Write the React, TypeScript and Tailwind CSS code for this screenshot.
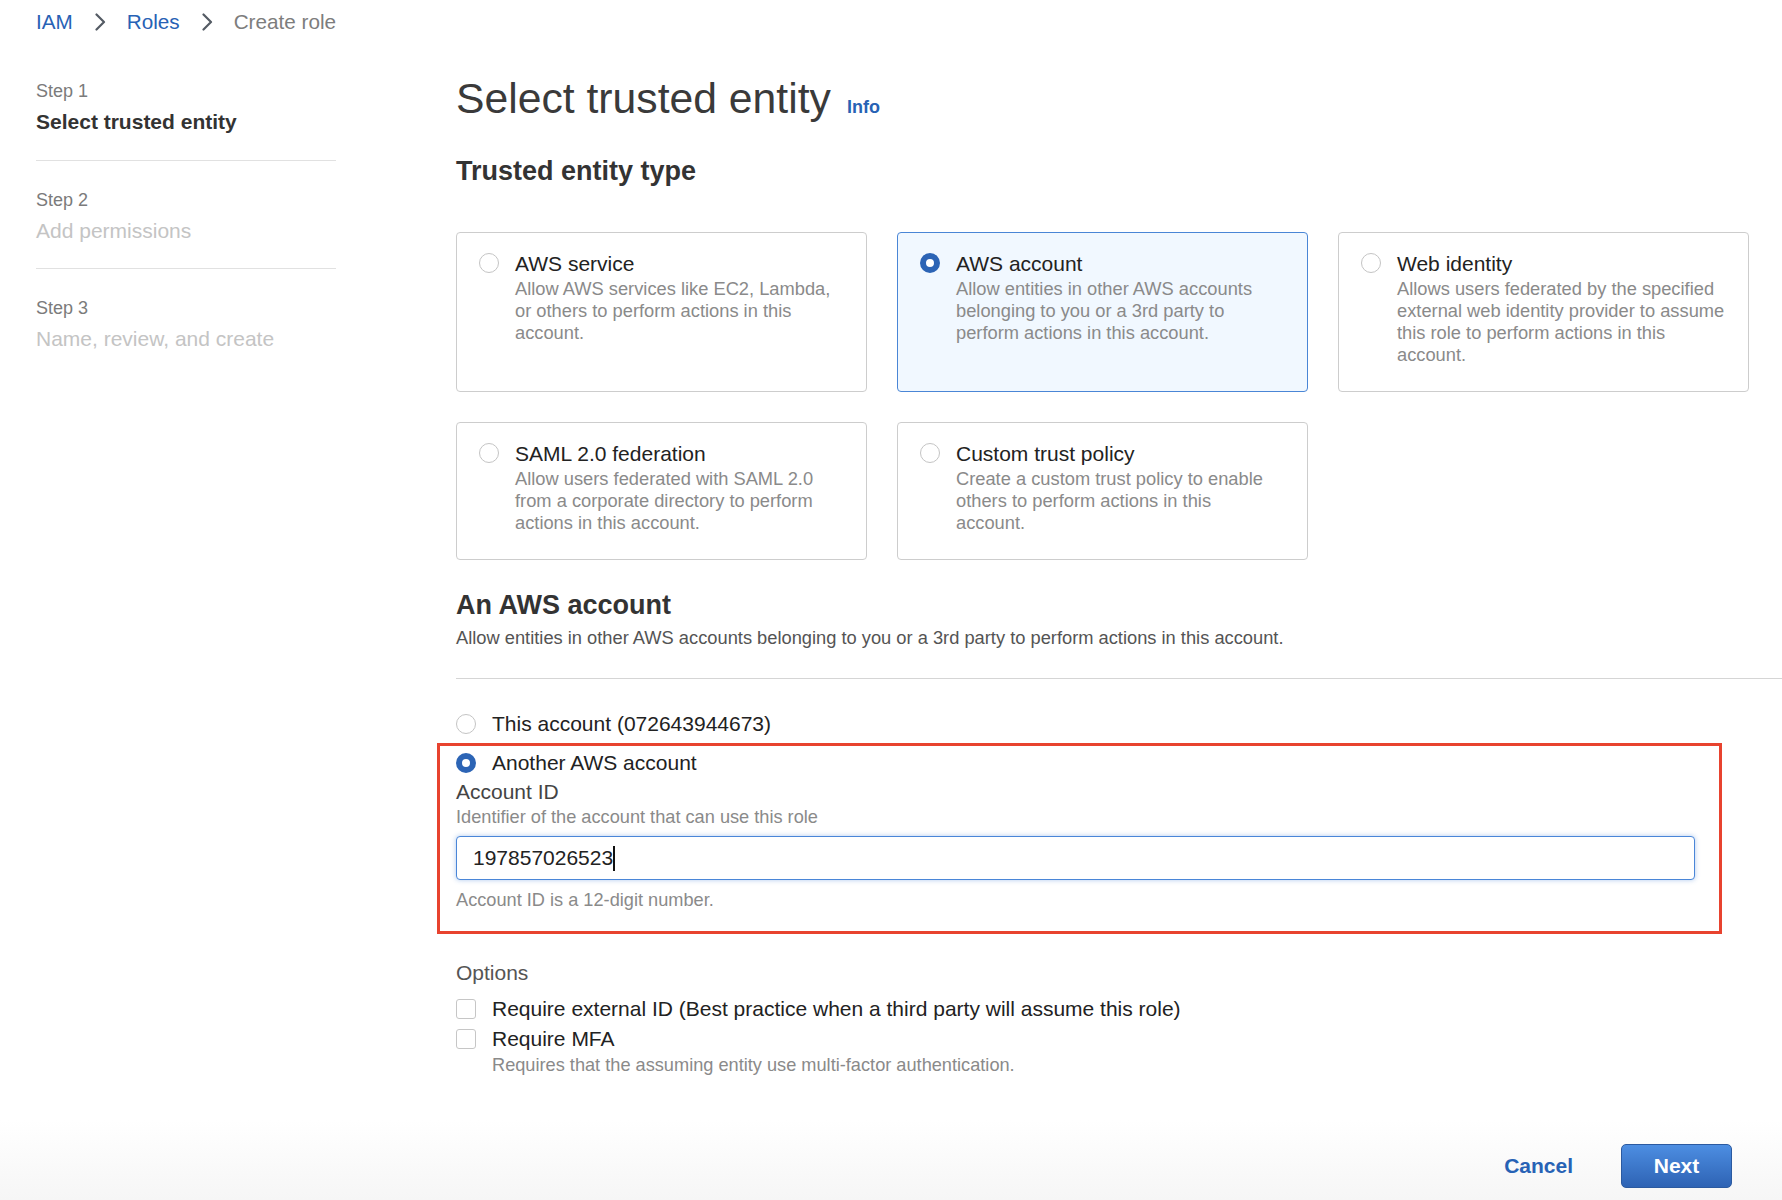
import React from "react";

function Chevron() {
  return (
    <svg width="12" height="18" viewBox="0 0 12 18" className="shrink-0">
      <path d="M2.5 1.5 L10 9 L2.5 16.5" fill="none" stroke="#545b64" strokeWidth="2.2" strokeLinecap="round" strokeLinejoin="round" />
    </svg>
  );
}

function Radio({ checked }: { checked?: boolean }) {
  return checked ? (
    <span className="block w-[20px] h-[20px] shrink-0 rounded-full border-[6px] border-[#2c64b5] bg-white" />
  ) : (
    <span className="block w-[20px] h-[20px] shrink-0 rounded-full border border-[#c4c4c4] bg-white" />
  );
}

function Checkbox() {
  return <span className="block w-[20px] h-[20px] shrink-0 rounded-[3px] border border-[#c6c6c6] bg-white" />;
}

function Card({ title, lines, selected }: { title: string; lines: string[]; selected?: boolean }) {
  return (
    <div
      className={
        selected
          ? "flex gap-[16px] rounded-[4px] border border-[#4a86d6] bg-[#f1f8ff] pt-[19px] pb-[25px] pl-[22px] pr-[12px]"
          : "flex gap-[16px] rounded-[4px] border border-[#cdcdcd] bg-white pt-[19px] pb-[25px] pl-[22px] pr-[12px]"
      }
    >
      <div className="pt-[1px]">
        <Radio checked={selected} />
      </div>
      <div>
        <div className="text-[21px] leading-[24px] text-[#222]">{title}</div>
        <div className="mt-[2px] text-[18.3px] leading-[22px] text-[#8a8a8a]">
          {lines.map((l) => (
            <div key={l} className="whitespace-nowrap">{l}</div>
          ))}
        </div>
      </div>
    </div>
  );
}

export default function App() {
  return (
    <div className="min-h-[1200px] flex flex-col bg-white text-[#333] font-['Liberation_Sans',Arial,sans-serif]">
      <nav className="flex items-center pl-[36px] pt-[10px] text-[20.7px] leading-[24px]">
        <span className="text-[#2762b5]">IAM</span>
        <span className="mx-[21px] flex"><Chevron /></span>
        <span className="text-[#2762b5]">Roles</span>
        <span className="mx-[21px] flex"><Chevron /></span>
        <span className="text-[#7d7d7d]">Create role</span>
      </nav>

      <div className="flex pl-[36px]">
        <aside className="w-[300px] shrink-0 pt-[45px]">
          <div className="pb-[24px] border-b border-[#e1e1e1]">
            <div className="text-[18px] leading-[24px] text-[#7b7b7b]">Step 1</div>
            <div className="mt-[5px] text-[21px] leading-[28px] font-bold text-[#333]">Select trusted entity</div>
          </div>
          <div className="pt-[27px] pb-[23px] border-b border-[#e1e1e1]">
            <div className="text-[18px] leading-[24px] text-[#7b7b7b]">Step 2</div>
            <div className="mt-[5px] text-[21px] leading-[28px] text-[#c4c4c4]">Add permissions</div>
          </div>
          <div className="pt-[27px]">
            <div className="text-[18px] leading-[24px] text-[#7b7b7b]">Step 3</div>
            <div className="mt-[5px] text-[21px] leading-[28px] text-[#c4c4c4]">Name, review, and create</div>
          </div>
        </aside>

        <main className="ml-[120px] flex-1 pt-[40px]">
          <div className="flex items-baseline gap-[16px]">
            <h1 className="text-[42.7px] leading-[48px] text-[#3a3a3a]">Select trusted entity</h1>
            <span className="text-[18px] font-bold text-[#2762b5]">Info</span>
          </div>

          <h2 className="mt-[33px] text-[27px] leading-[32px] font-bold text-[#333]">Trusted entity type</h2>

          <div className="mt-[45px] w-[1293px] grid grid-cols-3 gap-[30px]">
            <Card
              title="AWS service"
              lines={["Allow AWS services like EC2, Lambda,", "or others to perform actions in this", "account."]}
            />
            <Card
              selected
              title="AWS account"
              lines={["Allow entities in other AWS accounts", "belonging to you or a 3rd party to", "perform actions in this account."]}
            />
            <Card
              title="Web identity"
              lines={[
                "Allows users federated by the specified",
                "external web identity provider to assume",
                "this role to perform actions in this",
                "account.",
              ]}
            />
            <Card
              title="SAML 2.0 federation"
              lines={["Allow users federated with SAML 2.0", "from a corporate directory to perform", "actions in this account."]}
            />
            <Card
              title="Custom trust policy"
              lines={["Create a custom trust policy to enable", "others to perform actions in this", "account."]}
            />
          </div>

          <h2 className="mt-[29px] text-[27px] leading-[32px] font-bold text-[#333]">An AWS account</h2>
          <p className="mt-[6px] text-[18.3px] leading-[22px] text-[#545454]">
            Allow entities in other AWS accounts belonging to you or a 3rd party to perform actions in this account.
          </p>
          <div className="mt-[29px] border-t border-[#d5d5d5]" />

          <div className="mt-[33px] flex items-center gap-[16px]">
            <Radio />
            <span className="text-[21px] leading-[24px] text-[#222]">This account (072643944673)</span>
          </div>

          <div className="mt-[7px] -ml-[19px] w-[1285px] border-[3px] border-[#e8432f] pl-[16px] pr-[24px] pt-[5px] pb-[20px]">
            <div className="flex items-center gap-[16px]">
              <Radio checked />
              <span className="text-[21px] leading-[24px] text-[#222]">Another AWS account</span>
            </div>
            <div className="mt-[5px] text-[21px] leading-[24px] text-[#444]">Account ID</div>
            <div className="mt-[2px] text-[18.2px] leading-[22px] text-[#8a8a8a]">Identifier of the account that can use this role</div>
            <div className="mt-[8px] h-[44px] flex items-center rounded-[4px] border border-[#4a86d8] bg-white pl-[16px] shadow-[0_0_5px_rgba(74,134,216,0.45)]">
              <span className="text-[21px] leading-[24px] text-[#222]">197857026523</span>
              <span className="block w-[1.5px] h-[25px] bg-[#111]" />
            </div>
            <div className="mt-[9px] text-[18.2px] leading-[22px] text-[#8a8a8a]">Account ID is a 12-digit number.</div>
          </div>

          <div className="mt-[27px] text-[21px] leading-[24px] text-[#555]">Options</div>
          <div className="mt-[12px] flex items-center gap-[16px]">
            <Checkbox />
            <span className="text-[21px] leading-[24px] text-[#222]">
              Require external ID (Best practice when a third party will assume this role)
            </span>
          </div>
          <div className="mt-[6px] flex items-center gap-[16px]">
            <Checkbox />
            <span className="text-[21px] leading-[24px] text-[#222]">Require MFA</span>
          </div>
          <div className="mt-[3px] pl-[36px] text-[18.2px] leading-[22px] text-[#8a8a8a]">
            Requires that the assuming entity use multi-factor authentication.
          </div>
        </main>
      </div>

      <footer className="mt-auto h-[80px] flex items-start justify-end gap-[48px] pr-[50px] pt-[24px] bg-linear-to-b from-white to-[#f6f6f6]">
        <span className="h-[44px] flex items-center text-[21px] font-bold text-[#2762b5]">Cancel</span>
        <span className="h-[44px] w-[111px] flex items-center justify-center rounded-[5px] border border-[#2b5aa0] bg-linear-to-b from-[#4d8ee2] to-[#2e63b4] text-[21px] font-bold text-white">
          Next
        </span>
      </footer>
    </div>
  );
}
